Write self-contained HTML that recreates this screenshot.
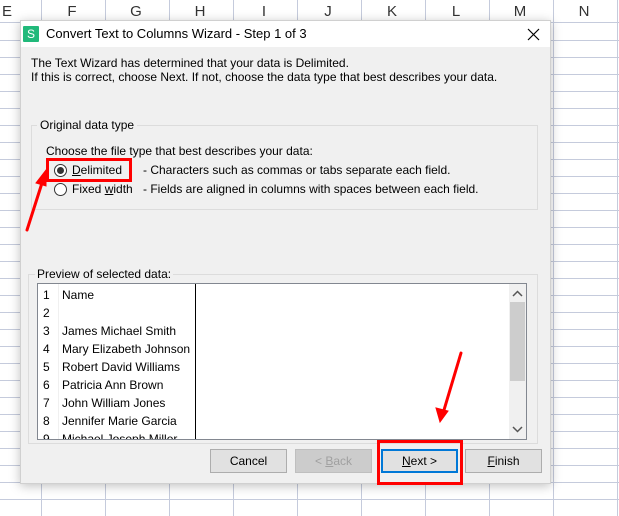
<!DOCTYPE html>
<html><head><meta charset="utf-8"><style>
*{margin:0;padding:0;box-sizing:border-box}
body{width:619px;height:516px;overflow:hidden;background:#fff;font-family:"Liberation Sans",sans-serif;font-size:12px;color:#000;position:relative}
.a{position:absolute}
.col{position:absolute;top:0;height:516px;width:1px;background:#c5cbdc}
.row{position:absolute;left:0;width:619px;height:1px;background:#c5cbdc}
.hl{position:absolute;top:3px;font-size:15px;color:#333;width:20px;text-align:center}
.btn{position:absolute;top:449px;width:77px;height:24px;border:1px solid #adadad;background:#e1e1e1;text-align:center;line-height:22px;font-size:12px}
u{text-decoration:underline}
</style></head><body>
<div class="a" style="left:0;top:0;width:619px;height:22px;background:#fff"></div>
<div class="hl" style="left:-3px">E</div>
<div class="hl" style="left:62px">F</div>
<div class="hl" style="left:126px">G</div>
<div class="hl" style="left:190px">H</div>
<div class="hl" style="left:254px">I</div>
<div class="hl" style="left:318px">J</div>
<div class="hl" style="left:382px">K</div>
<div class="hl" style="left:446px">L</div>
<div class="hl" style="left:510px">M</div>
<div class="hl" style="left:574px">N</div>
<div class="col" style="left:41px"></div>
<div class="col" style="left:105px"></div>
<div class="col" style="left:169px"></div>
<div class="col" style="left:233px"></div>
<div class="col" style="left:297px"></div>
<div class="col" style="left:361px"></div>
<div class="col" style="left:425px"></div>
<div class="col" style="left:489px"></div>
<div class="col" style="left:553px"></div>
<div class="col" style="left:617px"></div>
<div class="row" style="top:22px"></div>
<div class="row" style="top:40px"></div><div class="row" style="top:57px"></div><div class="row" style="top:74px"></div><div class="row" style="top:91px"></div><div class="row" style="top:108px"></div><div class="row" style="top:125px"></div><div class="row" style="top:142px"></div><div class="row" style="top:159px"></div><div class="row" style="top:176px"></div><div class="row" style="top:193px"></div><div class="row" style="top:210px"></div><div class="row" style="top:227px"></div><div class="row" style="top:244px"></div><div class="row" style="top:261px"></div><div class="row" style="top:278px"></div><div class="row" style="top:295px"></div><div class="row" style="top:312px"></div><div class="row" style="top:329px"></div><div class="row" style="top:346px"></div><div class="row" style="top:363px"></div><div class="row" style="top:380px"></div><div class="row" style="top:397px"></div><div class="row" style="top:414px"></div><div class="row" style="top:431px"></div><div class="row" style="top:448px"></div><div class="row" style="top:465px"></div><div class="row" style="top:482px"></div><div class="row" style="top:499px"></div>

<div class="a" style="left:20px;top:20px;width:531px;height:464px;background:#f0f0f0;border:1px solid #d0d0d0;box-shadow:0 2px 10px rgba(0,0,0,.25)">
<div class="a" style="left:0;top:0;width:529px;height:26px;background:#fff"></div>
<div class="a" style="left:2px;top:5px;width:16px;height:16px;background:#21b97a;border-radius:1px;color:#fff;font-size:12px;line-height:16px;text-align:center">S</div>
<div class="a" style="left:25px;top:5px;font-size:13px">Convert Text to Columns Wizard - Step 1 of 3</div>
<svg class="a" style="left:506px;top:7px" width="13" height="13"><path d="M1 1L12 12M12 1L1 12" stroke="#000" stroke-width="1.2"/></svg>
<div class="a" style="left:10px;top:35px;line-height:14px">The Text Wizard has determined that your data is Delimited.<br>If this is correct, choose Next. If not, choose the data type that best describes your data.</div>

<div class="a" style="left:10px;top:104px;width:507px;height:85px;border:1px solid #dcdcdc"></div>
<div class="a" style="left:16px;top:97px;background:#f0f0f0;padding:0 3px">Original data type</div>
<div class="a" style="left:25px;top:123px">Choose the file type that best describes your data:</div>
<div class="a" style="left:33px;top:143px;width:13px;height:13px;border:1px solid #333;border-radius:50%;background:#fff"></div>
<div class="a" style="left:36px;top:146px;width:7px;height:7px;border-radius:50%;background:#333"></div>
<div class="a" style="left:51px;top:142px"><u>D</u>elimited</div>
<div class="a" style="left:122px;top:142px">- Characters such as commas or tabs separate each field.</div>
<div class="a" style="left:33px;top:162px;width:13px;height:13px;border:1px solid #333;border-radius:50%;background:#fff"></div>
<div class="a" style="left:51px;top:161px">Fixed <u>w</u>idth</div>
<div class="a" style="left:122px;top:161px">- Fields are aligned in columns with spaces between each field.</div>

<div class="a" style="left:7px;top:253px;width:510px;height:170px;border:1px solid #dcdcdc"></div>
<div class="a" style="left:14px;top:246px;background:#f0f0f0;padding:0 2px">Preview of selected data:</div>
<div class="a" style="left:16px;top:262px;width:490px;height:157px;border:1px solid #828790;background:#fff;overflow:hidden">
<div class="a" style="left:20px;top:0;width:1px;height:157px;background:#f0f0f0"></div>
<div class="a" style="left:157px;top:0;width:1px;height:157px;background:#000"></div>
<div class="a" style="left:5px;top:2px;line-height:18px">1<br>2<br>3<br>4<br>5<br>6<br>7<br>8<br>9</div>
<div class="a" style="left:24px;top:2px;line-height:18px">Name<br>&nbsp;<br>James Michael Smith<br>Mary Elizabeth Johnson<br>Robert David Williams<br>Patricia Ann Brown<br>John William Jones<br>Jennifer Marie Garcia<br>Michael Joseph Miller</div>
<div class="a" style="left:471px;top:0;width:17px;height:155px;background:#f0f0f0"></div>
<svg class="a" style="left:474px;top:6px" width="11" height="8"><path d="M1 6L5.5 1.5L10 6" stroke="#555" stroke-width="1.5" fill="none"/></svg>
<div class="a" style="left:472px;top:18px;width:15px;height:79px;background:#cdcdcd"></div>
<svg class="a" style="left:474px;top:141px" width="11" height="8"><path d="M1 2L5.5 6.5L10 2" stroke="#555" stroke-width="1.5" fill="none"/></svg>
</div>
</div>

<div class="btn" style="left:210px">Cancel</div>
<div class="btn" style="left:295px;color:#a0a0a0;background:#cccccc;border-color:#bfbfbf">&lt; <u>B</u>ack</div>
<div class="btn" style="left:381px;border:2px solid #0078d7;line-height:20px"><u>N</u>ext &gt;</div>
<div class="btn" style="left:465px"><u>F</u>inish</div>

<div class="a" style="left:46px;top:158px;width:86px;height:24px;border:3px solid #f00"></div>
<div class="a" style="left:377px;top:440px;width:86px;height:45px;border:3px solid #f00"></div>
<svg class="a" style="left:0;top:0" width="619" height="516">
<g stroke="#f00" stroke-width="3" fill="#f00" stroke-linecap="round">
<line x1="27" y1="230" x2="42" y2="183"/>
<polygon points="46,170 36,183 46,186" stroke-width="1"/>
<line x1="461" y1="353" x2="444" y2="410"/>
<polygon points="440,422 436,408 448,411" stroke-width="1"/>
</g></svg>
</body></html>
